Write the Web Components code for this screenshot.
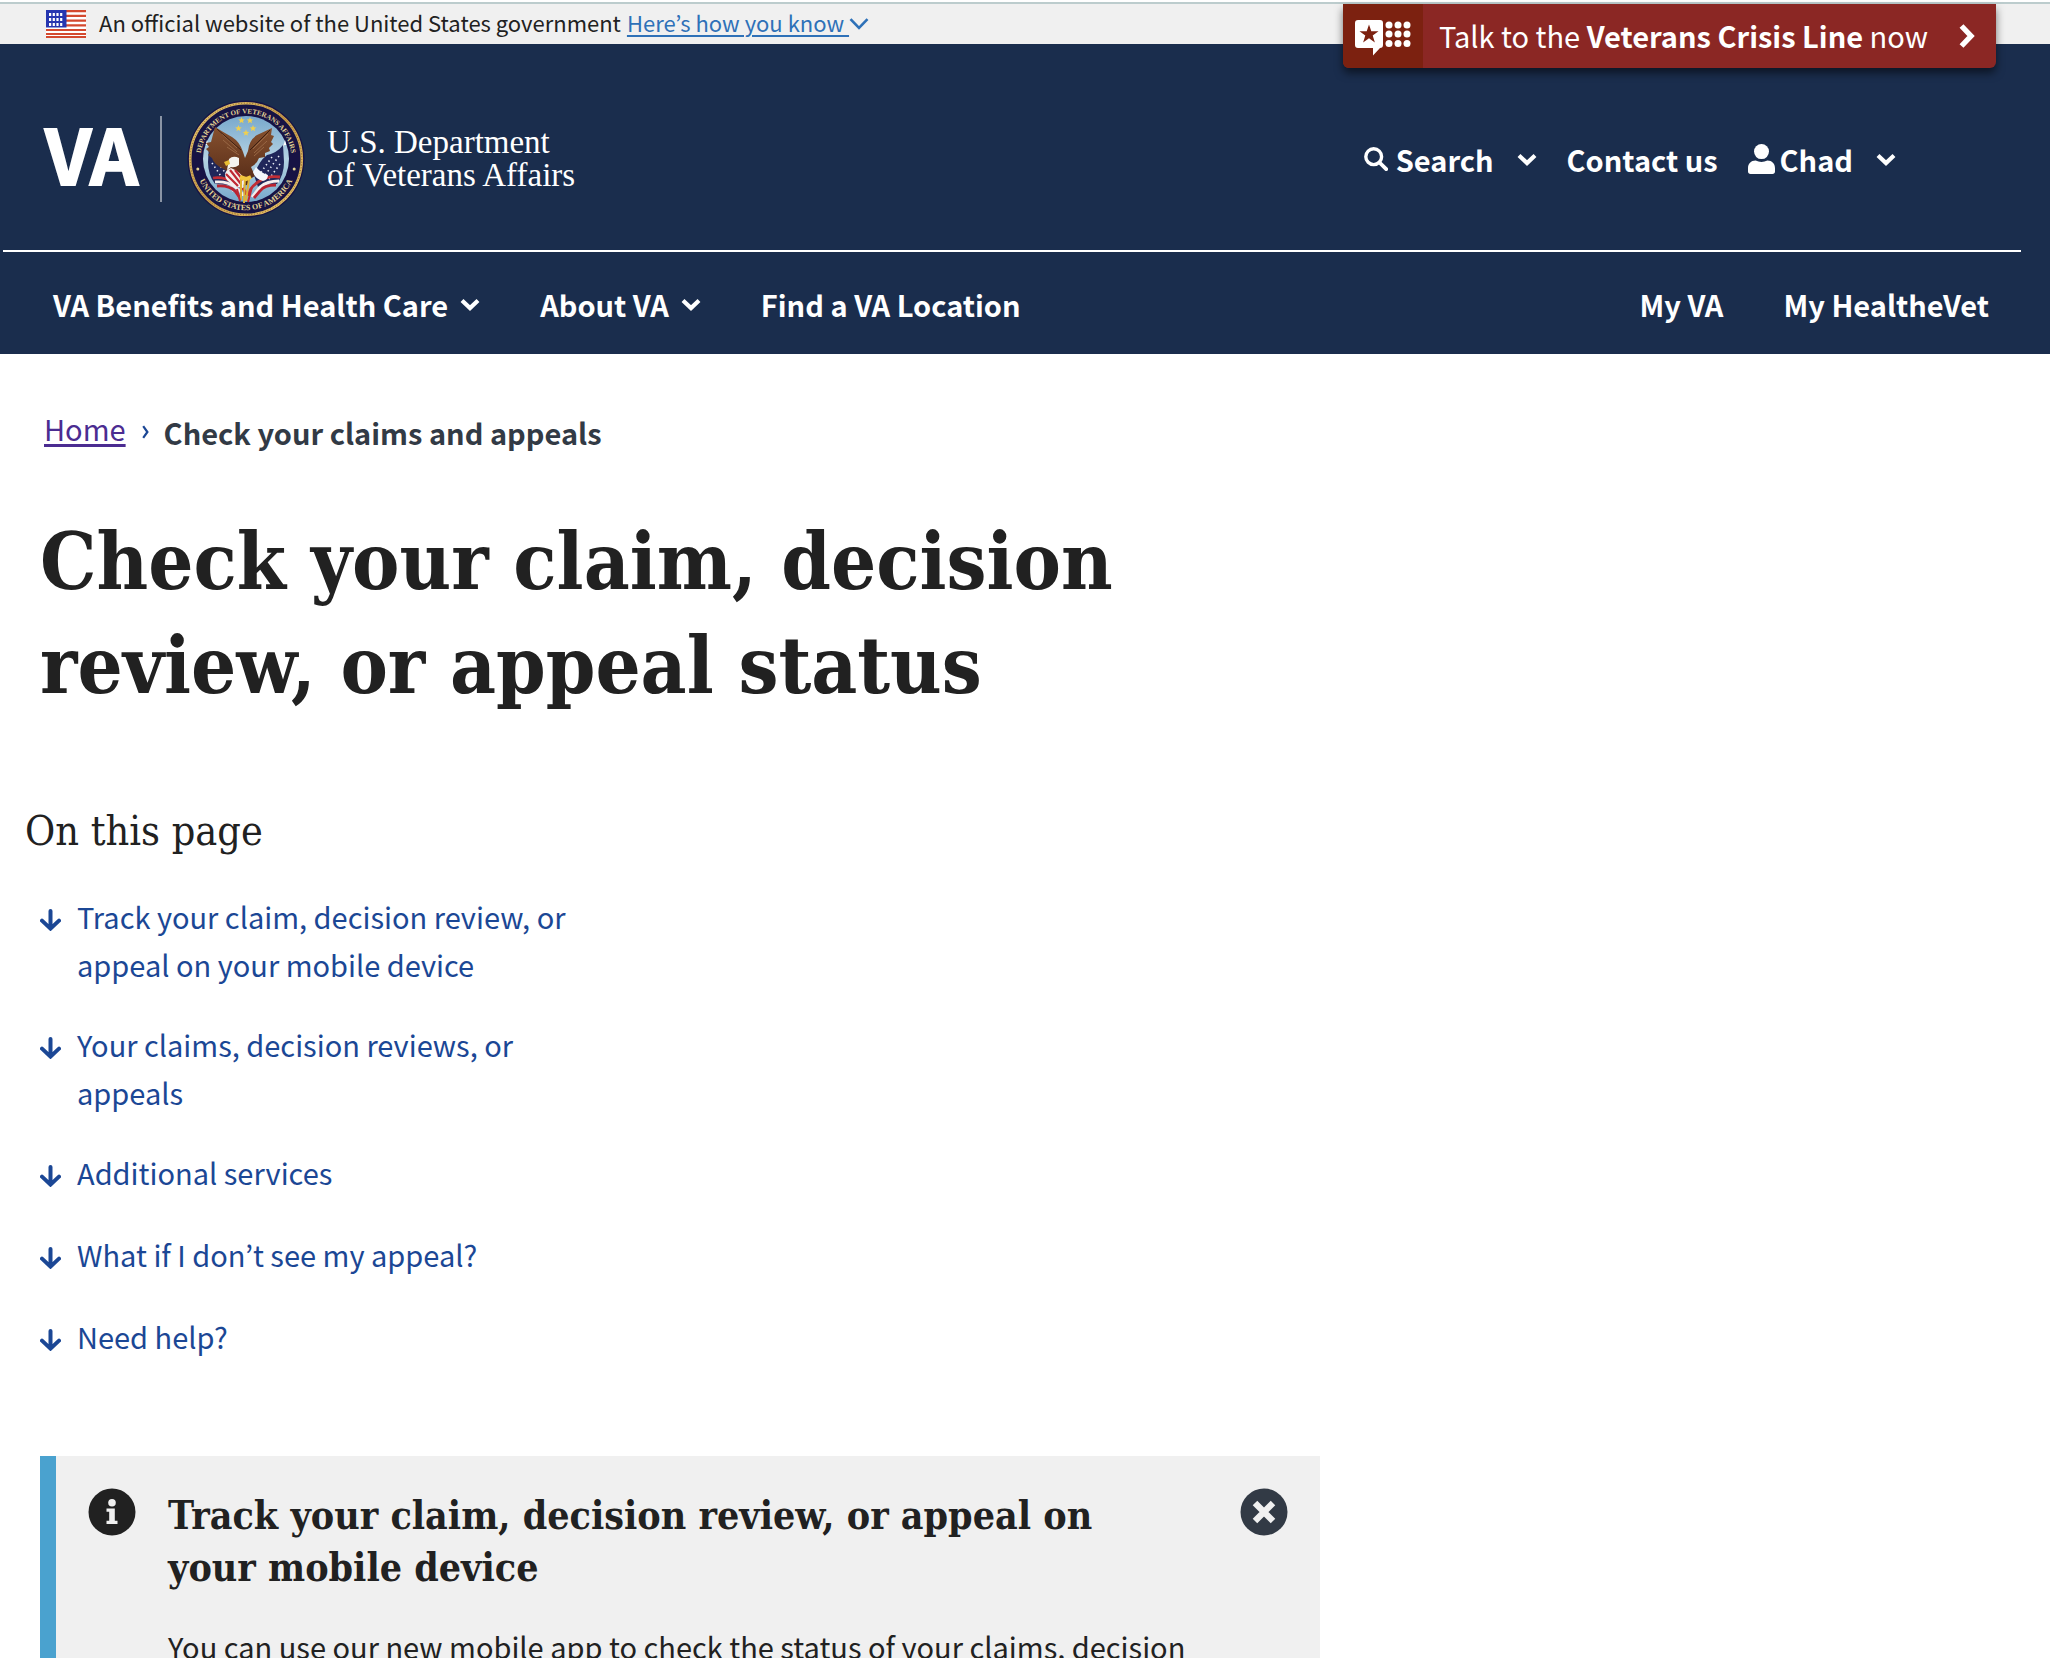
<!DOCTYPE html>
<html lang="en">
<head>
<meta charset="utf-8">
<title>Check your claim, decision review, or appeal status</title>
<style>
html { --sans: "Noto Sans CJK KR", "Noto Sans", sans-serif; --slab: "DejaVu Serif Condensed", "DejaVu Serif", serif; --navy: #1a2d4d; --ink: #212121; }
body { margin: 0; height: 100vh; overflow: hidden; background: #fff; color: var(--ink); font: 29px/48px var(--sans); }
</style>
</head>
<body>
<va-page></va-page>
<script>
const define = (name, markup) => {
  const template = document.createElement('template');
  template.innerHTML = markup;
  customElements.define(name, class extends HTMLElement {
    constructor() {
      super();
      this.attachShadow({ mode: 'open' }).append(template.content.cloneNode(true));
    }
  });
};

const icons = {
  chevron: ['0 0 20 13', '<path d="M2 2.500 10 10 18 2.500" fill="none" stroke="currentColor" stroke-width="4.200"/>'],
  thin: ['0 0 20 12', '<path d="M1.5 1.2 10 10 18.5 1.2" fill="none" stroke="currentColor" stroke-width="2.6"/>'],
  right: ['0 0 18 26', '<path d="M3.5 3 13 13 3.5 23" fill="none" stroke="currentColor" stroke-width="5.400"/>'],
  crumb: ['0 0 7 14', '<path d="M1.2 1.2 5.4 7 1.2 12.8" fill="none" stroke="currentColor" stroke-width="2.200"/>'],
  search: ['0 0 24 24', '<circle cx="9.7" cy="9.7" r="7.9" fill="none" stroke="currentColor" stroke-width="3.4"/><path d="m15.5 15.5 6.7 6.7" stroke="currentColor" stroke-width="3.8" stroke-linecap="round"/>'],
  user: ['0 0 27 30', '<circle cx="13.5" cy="7.6" r="7.5" fill="currentColor"/><path d="M7.6 16.6c3.8 1.8 8 1.8 11.8 0 4.600 0 7.600 3.200 7.600 7.600v3.300c0 1.500-1 2.500-2.500 2.500h-22C1 30 0 29 0 27.500v-3.300c0-4.400 3-7.600 7.600-7.600z" fill="currentColor"/>'],
  down: ['0 0 21 22', '<path d="M10.500 2v17M2 11.600l8.500 8L19 11.600" fill="none" stroke="currentColor" stroke-width="4" stroke-linecap="round"/>'],
  info: ['0 0 48 48', '<circle cx="24" cy="24" r="23.500" fill="currentColor"/><g fill="#f0f0f0"><circle cx="24" cy="14.700" r="3.800"/><path d="M18.500 20.500h8.300v12.300h2.700V36h-11v-3.200h2.700v-9h-2.700z"/></g>'],
  close: ['0 0 48 48', '<circle cx="24" cy="24" r="23.500" fill="currentColor"/><path d="m15 15 18 18m0-18-18 18" stroke="#f0f0f0" stroke-width="6.400"/>'],
  chat: ['0 0 56 36', '<path d="M3 0h22q3 0 3 3v22q0 3-3 3l-7 7.500V28H3q-3 0-3-3V3q0-3 3-3z" fill="#fff"/><path d="m14 4.500 2.300 6.800h7.200l-5.800 4.300 2.200 6.900-5.900-4.200-5.900 4.200 2.200-6.900-5.800-4.300h7.200z" fill="#7c2110"/><g fill="#fff"><circle cx="34" cy="5" r="3.500"/><circle cx="43" cy="5" r="3.500"/><circle cx="52" cy="5" r="3.500"/><circle cx="34" cy="14" r="3.500"/><circle cx="43" cy="14" r="3.500"/><circle cx="52" cy="14" r="3.500"/><circle cx="34" cy="23.500" r="3.500"/><circle cx="43" cy="23.500" r="3.500"/><circle cx="52" cy="23.500" r="3.500"/></g>'],
  flag: ['0 0 40 28', '<path fill="#fff" d="M0 0h40v28H0z"/><path d="M0 1.200h40M0 5.900h40M0 10.600h40M0 15.300h40M0 20h40M0 24h40M0 27.200h40" stroke="#d3492f" stroke-width="2.200"/><path fill="#2636b0" d="M0 0h20.500v17.500H0z"/><path d="M3 4.500h14M3 9.500h14M3 14.500h14" stroke="#fff" stroke-width="2.800" stroke-dasharray="2.200 1.500"/>']
};
customElements.define('va-icon', class extends HTMLElement {
  connectedCallback() {
    if (this.shadowRoot) return;
    const [box, art] = icons[this.getAttribute('name')];
    const [, , w, h] = box.split(' ');
    this.attachShadow({ mode: 'open' }).innerHTML =
      `<style>:host{display:inline-flex;flex:none}svg{display:block}</style><svg viewBox="${box}" width="${w}" height="${h}" aria-hidden="true">${art}</svg>`;
  }
});

define('va-banner', `
<style>
:host { display: flex; align-items: center; height: 40px; margin-top: 2px; padding-left: 46px; border-top: 2px solid #bccccd; background: #f0f0f0; font-size: 22px; line-height: 34px; }
span, u { padding-bottom: 4px; }
span { margin: 0 6px 0 13px; }
a { display: flex; align-items: center; color: #2e71b8; text-decoration: none; }
u { text-decoration-thickness: 2px; text-underline-offset: 3px; white-space: pre; }
</style>
<va-icon name="flag"></va-icon><span>An official website of the United States government</span>
<a href="#how"><u>Here’s how you know </u><va-icon name="thin"></va-icon></a>`);

define('va-crisis-line', `
<style>
:host { position: absolute; top: 4px; right: 54px; }
a { display: flex; align-items: center; height: 64px; border-radius: 0 0 6px 6px; overflow: hidden; background: #8b2724; color: #fff; text-decoration: none; box-shadow: 0 5px 9px #0008; }
.mark { display: flex; align-items: center; justify-content: center; width: 80px; height: 100%; background: #7c2110; }
.mark va-icon { padding-top: 4px; }
.text { padding: 0 30px 3px 16px; }
.end { padding-right: 20px; display: flex; }
</style>
<a href="#crisis"><span class="mark"><va-icon name="chat"></va-icon></span><span class="text">Talk to the <b>Veterans Crisis Line</b> now</span><span class="end"><va-icon name="right"></va-icon></span></a>`);

define('va-seal', `
<style>:host { display: block; } svg { display: block; } text { font: bold 7px "Liberation Serif", serif; fill: #e3d394; } .low { font-size: 8px; }</style>
<svg viewBox="0 0 118 118" width="118" height="118" role="img" aria-label="Seal">
<defs>
<path id="top" d="M14.200 66.900A45.500 45.500 0 1 1 103.800 66.900"/><path id="low" d="M8.200 66A51.300 51.300 0 0 0 109.800 66"/>
<linearGradient id="gold" x1="0" y1="0" x2="1" y2="1"><stop offset="0" stop-color="#e9c872"/><stop offset=".5" stop-color="#c79b49"/><stop offset="1" stop-color="#ecc86c"/></linearGradient>
<linearGradient id="sky" x1="0" y1="0" x2="0" y2="1"><stop offset="0" stop-color="#78a8cc"/><stop offset=".5" stop-color="#b4d2e3"/><stop offset="1" stop-color="#77a9cb"/></linearGradient>
<linearGradient id="wing" x1="0" y1="0" x2="0" y2="1"><stop offset="0" stop-color="#87512f"/><stop offset="1" stop-color="#542a16"/></linearGradient>
<path id="star" d="m0-3.400.9 2.200 2.400.1-1.900 1.500.7 2.400L0 1.500-2.100 2.800-1.400.4-3.300-1.100-.9-1.200z"/>
</defs>
<circle cx="59" cy="59" r="58.500" fill="#171344"/><circle cx="59" cy="59" r="55.800" fill="none" stroke="url(#gold)" stroke-width="2.600"/><circle cx="59" cy="59" r="55.800" fill="none" stroke="#8c642b" stroke-width="1" stroke-dasharray="1 1.800"/>
<circle cx="59" cy="59" r="43" fill="url(#sky)"/>
<text><textPath href="#top" startOffset="50%" text-anchor="middle">DEPARTMENT OF VETERANS AFFAIRS</textPath></text>
<text class="low"><textPath href="#low" startOffset="50%" text-anchor="middle">UNITED STATES OF AMERICA</textPath></text>
<circle cx="10.800" cy="69" r="1.500" fill="#e3d394"/><circle cx="107.200" cy="69" r="1.500" fill="#e3d394"/>
<g fill="#f1d04d"><use href="#star" x="54.500" y="20.500"/><use href="#star" x="63" y="20.500"/><use href="#star" x="51.500" y="28.500"/><use href="#star" x="66" y="28.500"/><use href="#star" x="59" y="33"/></g>
<path d="M20 43 46 92M98 43 72 92" stroke="#dfe3e6" stroke-width="1"/><path d="m20 40 1.300 5-2.600 0zM98 40l-1.300 5 2.600 0z" fill="#fff"/>
<path d="M22 45q6 8 16 10 8 6 14 20l-4 12q-8-3-20-3-7-9-7-22z" fill="#20265a"/>
<path d="M96 45q-6 8-16 10-8 6-13 20l4 12q9-4 19-3 7-9 7-22z" fill="#20265a"/>
<path d="M26 56l16 22M25 63l11 16M33 57l14 18M92 56 76 78M93 64 82 79M85 57 72 75" stroke="#eaeef5" stroke-width="1.600" stroke-dasharray="1.400 3"/>
<g fill="none" stroke-width="2.800"><path d="M26 78q10-2 22 5t11 12" stroke="#c12d36"/><path d="M28 82q12-1 20 5t8 9" stroke="#f5eeee"/><path d="M30 86q12-1 18 5l5 7" stroke="#b92331"/><path d="M93 77q-12-2-22 5T62 96" stroke="#c12d36"/><path d="M92 81q-12 0-19 6l-8 10" stroke="#f5eeee"/><path d="M89 85q-12 0-16 6l-6 7" stroke="#b92331"/></g>
<path d="M28 27q8 5 17 10 8 5 11 15l2 6 3-7q1-11 9-16l15-7-1 7 3 1-3 6 2 2-4 4 1 3-5 2 0 4-6 1q-2 6-8 9l4 9-5 3-3 6-6 1-3-7q-8-1-10-7l-4-3q-10-4-12-11l-4-3 2-2-4-4 3-2-3-4 5-1z" fill="url(#wing)"/>
<path d="m35 34 15 14M36 40l14 12M40 47l12 8M81 34 66 49M80 41 67 53M77 47l-10 9" stroke="#9c6b47" stroke-width=".9"/><path d="m30 29 24 21M83 30 63 50" stroke="#3e2012" stroke-width="1"/>
<path d="M42 59q4-4 10-1v7q-4 3-8 2l-4 3z" fill="#f4f4ef"/><path d="m42 60-5 2 2 4 4-2z" fill="#e8bd32"/>
<path d="M44 68q-6 2-6 7t9 11l9 2 2-8q-4-8-14-12z" fill="#f5f0ee"/><path d="m43 70 11 14M39 74l12 12M48 70l8 10" stroke="#bf2833" stroke-width="2.200"/>
<path d="M69 67q5 6 12 8 0 5-5 6-8-2-10-9z" fill="#f4f7fb"/>
<path d="M54 78v22M58 77l-1 26M62 79l-3 22" stroke="#e0b233" stroke-width="2"/><path d="M50 89l3 12M65 87l-4 15" stroke="#bf2833" stroke-width="2"/><path d="m53 77 6 2 5-2" stroke="#f0c73e" stroke-width="4" fill="none"/>
</svg>`);

define('va-header', `
<style>
:host { display: block; background: var(--navy); color: #fff; font-weight: 700; }
.top { display: flex; align-items: center; height: 182px; padding: 24px 154px 0 45px; }
a, button { display: flex; align-items: center; color: inherit; font: inherit; text-decoration: none; background: none; border: 0; padding: 0; }
.va { padding-bottom: 12px; font-size: 75px; line-height: 84px; -webkit-text-stroke: 2px #fff; }
.bar { width: 2px; height: 86px; margin: 0 25px 0 22px; background: #8b95a5; }
.dept { margin-left: 22px; font: 33px/33px "Liberation Serif", serif; }
.tools { display: flex; align-items: center; margin-left: auto; gap: 30px; }
.tools va-icon[name=search] { margin-right: 8px; }
.tools va-icon[name=user] { margin-right: 5px; }
.tools va-icon[name=chevron] { margin-left: 23px; }
hr { height: 2px; margin: 0 29px 0 3px; border: 0; background: #fff; }
nav { display: flex; align-items: center; height: 100px; padding: 2px 61px 0 53px; gap: 60px; }
nav va-icon { margin-left: 12px; }
.mine { display: flex; gap: 60px; margin-left: auto; }
</style>
<div class="top">
<a href="#home"><span class="va">VA</span><span class="bar"></span><va-seal></va-seal><span class="dept">U.S. Department<br>of Veterans Affairs</span></a>
<div class="tools"><button><va-icon name="search"></va-icon>Search<va-icon name="chevron"></va-icon></button><a href="#contact">Contact us</a><button><va-icon name="user"></va-icon>Chad<va-icon name="chevron"></va-icon></button></div>
</div>
<hr>
<nav><button>VA Benefits and Health Care<va-icon name="chevron"></va-icon></button><button>About VA<va-icon name="chevron"></va-icon></button><a href="#find">Find a VA Location</a><div class="mine"><a href="#myva">My VA</a><a href="#mhv">My HealtheVet</a></div></nav>`);

define('va-breadcrumbs', `
<style>
:host { display: block; }
nav { display: flex; align-items: center; padding: 46px 44px 0; }
a { color: #4b2c91; text-decoration-thickness: 3px; text-underline-offset: 3px; }
va-icon { margin: 0 15px 0 16px; padding-top: 8px; color: #1b4795; }
b { color: #323a45; padding-top: 8px; }
</style>
<nav aria-label="Breadcrumb"><a href="#home">Home</a><va-icon name="crumb"></va-icon><b>Check your claims and appeals</b></nav>`);

define('va-page-title', `
<style>:host { display: block; } h1 { margin: 0; padding: 54px 40px 0; max-width: 1120px; font: 700 79px/104px var(--slab); }</style>
<h1><slot></slot></h1>`);

define('va-jump-link', `
<style>
:host { display: block; min-height: 50px; }
a { display: flex; gap: 16px; color: #1b4795; text-decoration: none; }
va-icon { padding-top: 17px; }
</style>
<a href="#section"><va-icon name="down"></va-icon><span><slot></slot></span></a>`);

define('va-on-this-page', `
<style>
:host { display: block; padding: 87px 25px 0; }
h2 { margin: 0; font: 400 41px/52px var(--slab); }
nav { display: flex; flex-direction: column; gap: 32px; max-width: 530px; padding: 35px 0 0 15px; }
</style>
<h2>On this page</h2>
<nav aria-label="On this page">
<va-jump-link>Track your claim, decision review, or appeal on your mobile device</va-jump-link>
<va-jump-link>Your claims, decision reviews, or appeals</va-jump-link>
<va-jump-link>Additional services</va-jump-link>
<va-jump-link>What if I don’t see my appeal?</va-jump-link>
<va-jump-link>Need help?</va-jump-link>
</nav>`);

define('va-alert', `
<style>
:host { display: flex; align-items: flex-start; max-width: 1200px; margin: 94px 40px 0; padding: 32px; border-left: 16px solid #4aa2cf; background: #f0f0f0; }
.body { flex: 1; padding: 1px 40px 0 32px; }
h2 { max-width: 1000px; margin: 0 0 29px; font: 700 39px/52px var(--slab); }
p { margin: 0; }
button { display: flex; padding: 0; border: 0; background: none; color: #323a45; }
</style>
<va-icon name="info"></va-icon>
<div class="body"><h2><slot name="title"></slot></h2><p><slot></slot></p></div>
<button aria-label="Close"><va-icon name="close"></va-icon></button>`);

define('va-page', `
<style>:host { display: block; }</style>
<va-banner></va-banner>
<va-header></va-header>
<va-crisis-line></va-crisis-line>
<main>
<va-breadcrumbs></va-breadcrumbs>
<va-page-title>Check your claim, decision review, or appeal status</va-page-title>
<va-on-this-page></va-on-this-page>
<va-alert><span slot="title">Track your claim, decision review, or appeal on your mobile device</span>You can use our new mobile app to check the status of your claims, decision</va-alert>
</main>`);
</script>
</body>
</html>
